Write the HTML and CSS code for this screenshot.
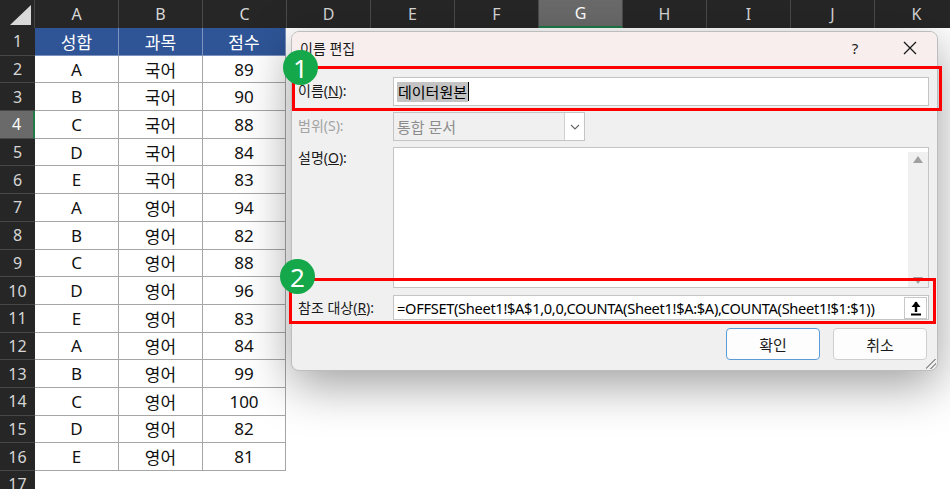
FILE: index.html
```html
<!DOCTYPE html>
<html lang="ko">
<head>
  <meta charset="UTF-8">
  <title>이름 편집</title>
  <link rel="stylesheet" href="styles.css">
</head>
<body>

  <!-- Sheet -->
  <div class="sheet">
    <div class="colhead">
      <div class="corner"><span class="corner-tri"></span></div>
      <div class="ch">A</div>
      <div class="ch">B</div>
      <div class="ch">C</div>
      <div class="ch">D</div>
      <div class="ch">E</div>
      <div class="ch">F</div>
      <div class="ch ch-sel">G</div>
      <div class="ch">H</div>
      <div class="ch">I</div>
      <div class="ch">J</div>
      <div class="ch">K</div>
    </div>

    <div class="row head-row"><div class="rh">1</div><div class="c hc">성함</div><div class="c hc">과목</div><div class="c hc">점수</div><div class="fill"></div></div>
    <div class="row"><div class="rh">2</div><div class="c">A</div><div class="c">국어</div><div class="c">89</div><div class="fill"></div></div>
    <div class="row"><div class="rh">3</div><div class="c">B</div><div class="c">국어</div><div class="c">90</div><div class="fill"></div></div>
    <div class="row"><div class="rh rh-sel">4</div><div class="c">C</div><div class="c">국어</div><div class="c">88</div><div class="fill"></div></div>
    <div class="row"><div class="rh">5</div><div class="c">D</div><div class="c">국어</div><div class="c">84</div><div class="fill"></div></div>
    <div class="row"><div class="rh">6</div><div class="c">E</div><div class="c">국어</div><div class="c">83</div><div class="fill"></div></div>
    <div class="row"><div class="rh">7</div><div class="c">A</div><div class="c">영어</div><div class="c">94</div><div class="fill"></div></div>
    <div class="row"><div class="rh">8</div><div class="c">B</div><div class="c">영어</div><div class="c">82</div><div class="fill"></div></div>
    <div class="row"><div class="rh">9</div><div class="c">C</div><div class="c">영어</div><div class="c">88</div><div class="fill"></div></div>
    <div class="row"><div class="rh">10</div><div class="c">D</div><div class="c">영어</div><div class="c">96</div><div class="fill"></div></div>
    <div class="row"><div class="rh">11</div><div class="c">E</div><div class="c">영어</div><div class="c">83</div><div class="fill"></div></div>
    <div class="row"><div class="rh">12</div><div class="c">A</div><div class="c">영어</div><div class="c">84</div><div class="fill"></div></div>
    <div class="row"><div class="rh">13</div><div class="c">B</div><div class="c">영어</div><div class="c">99</div><div class="fill"></div></div>
    <div class="row"><div class="rh">14</div><div class="c">C</div><div class="c">영어</div><div class="c">100</div><div class="fill"></div></div>
    <div class="row"><div class="rh">15</div><div class="c">D</div><div class="c">영어</div><div class="c">82</div><div class="fill"></div></div>
    <div class="row"><div class="rh">16</div><div class="c">E</div><div class="c">영어</div><div class="c">81</div><div class="fill"></div></div>
    <div class="row empty-row"><div class="rh">17</div><div class="e"></div><div class="e"></div><div class="e"></div><div class="fill"></div></div>
  </div>

  <!-- Dialog -->
  <div class="dialog">
    <div class="dlg-title">
      <span>이름 편집</span>
      <span class="title-btn help">?</span>
      <span class="title-btn close">
        <svg width="14" height="14" viewBox="0 0 14 14"><path d="M1 1 L13 13 M13 1 L1 13" stroke="#1a1a1a" stroke-width="1.3" fill="none"/></svg>
      </span>
    </div>

    <div class="dlg-body">
      <div class="field f-name">
        <label>이름(<u>N</u>):</label>
        <div class="box"><span class="sel-text">데이터원본</span><span class="caret"></span></div>
      </div>

      <div class="field f-scope">
        <label class="disabled">범위(S):</label>
        <div class="box scope-box">
          <span class="scope-text">통합 문서</span>
          <span class="drop">
            <svg width="10" height="6" viewBox="0 0 10 6"><path d="M1 1 L5 5 L9 1" stroke="#666" stroke-width="1.1" fill="none"/></svg>
          </span>
        </div>
      </div>

      <div class="field f-desc">
        <label>설명(<u>O</u>):</label>
        <div class="box desc-box">
          <div class="vscroll">
            <svg width="10" height="7" viewBox="0 0 10 7"><path d="M0 7 L5 0 L10 7 Z" fill="#a0a0a0"/></svg>
            <svg width="10" height="7" viewBox="0 0 10 7"><path d="M0 0 L5 7 L10 0 Z" fill="#a0a0a0"/></svg>
          </div>
        </div>
      </div>

      <div class="field f-ref">
        <label>참조 대상(<u>R</u>):</label>
        <div class="box ref-box">
          <span class="formula">=OFFSET(Sheet1!$A$1,0,0,COUNTA(Sheet1!$A:$A),COUNTA(Sheet1!$1:$1))</span>
          <span class="collapse-btn">
            <svg width="12" height="16" viewBox="0 0 12 16"><path d="M6 2 L6 12" stroke="#000" stroke-width="2.4"/><path d="M1.5 7 L6 1.5 L10.5 7 Z" fill="#000"/><path d="M1 14.5 L11 14.5" stroke="#000" stroke-width="2"/></svg>
          </span>
        </div>
      </div>

      <div class="dlg-buttons">
        <button class="btn btn-ok">확인</button>
        <button class="btn">취소</button>
      </div>
    </div>
    <span class="grip"></span>
  </div>

  <!-- Annotations -->
  <div class="mark mark-1"></div>
  <div class="mark mark-2"></div>
  <div class="badge badge-1">1</div>
  <div class="badge badge-2">2</div>

</body>
</html>
```

FILE: styles.css
```css
* {
  box-sizing: border-box;
  margin: 0;
  padding: 0;
}

body {
  font-family: "Noto Sans", "Noto Sans CJK KR", sans-serif;
  background: #fff;
  width: 950px;
  height: 489px;
  overflow: hidden;
  position: relative;
}

/* Sheet */
.sheet {
  width: 950px;
}

.colhead {
  display: flex;
  height: 28px;
  background: #262626;
}

.corner {
  width: 35px;
  flex: none;
  position: relative;
  border-right: 1px solid #444;
}

.corner-tri {
  position: absolute;
  right: 3px;
  bottom: 3px;
  width: 0;
  height: 0;
  border-left: 21px solid transparent;
  border-bottom: 20px solid #d9d9d9;
}

.ch {
  width: 84px;
  flex: none;
  color: #d6d6d6;
  font-size: 16px;
  display: flex;
  align-items: center;
  justify-content: center;
  border-right: 1px solid #4a4a4a;
}

.ch-sel {
  background: #6a6a6a;
  color: #fff;
  border-bottom: 2px solid #1f7a46;
}

.row {
  display: grid;
  grid-template-columns: 35px 84px 84px 83px 1fr;
  height: 27.7px;
}

.rh {
  background: #262626;
  color: #d6d6d6;
  font-size: 16px;
  display: flex;
  align-items: center;
  justify-content: center;
  border-bottom: 1px solid #474747;
}

.rh-sel {
  background: #6a6a6a;
  color: #fff;
  border-right: 2px solid #1f7a46;
}

.c {
  font-size: 17px;
  color: #111;
  display: flex;
  align-items: center;
  justify-content: center;
  border-right: 1px solid #a6a6a6;
  border-bottom: 1px solid #a6a6a6;
}

.hc {
  background: #2f5597;
  color: #fff;
  border-right: 1px solid #7d93bd;
  border-bottom: 1px solid #7d93bd;
}

.head-row .c:last-of-type {
  border-right-color: #a6a6a6;
}

.e {
  border-right: 1px solid transparent;
}

/* Dialog */
.dialog {
  position: absolute;
  left: 291px;
  top: 31px;
  width: 647px;
  height: 340px;
  background: #f0f0f0;
  border: 1px solid #bdbdbd;
  border-radius: 8px;
  box-shadow: 0 14px 48px rgba(0, 0, 0, 0.38);
  overflow: hidden;
}

.dlg-title {
  height: 31px;
  background: #f8eeee;
  display: flex;
  align-items: center;
  padding-left: 8px;
  font-size: 14px;
  color: #1a1a1a;
}

.title-btn {
  display: flex;
  align-items: center;
  justify-content: center;
}

.help {
  margin-left: auto;
  width: 20px;
  font-size: 15px;
  margin-right: 35px;
}

.close {
  width: 20px;
  margin-right: 17px;
}

.dlg-body {
  padding: 14px 8px 0 6px;
}

.field {
  display: grid;
  grid-template-columns: 95px 1fr;
}

.field label {
  font-size: 14px;
  color: #1a1a1a;
  padding-top: 3px;
}

.field label.disabled {
  color: #a3a3a3;
}

.box {
  background: #fff;
  border: 1px solid #c4c4c4;
  display: flex;
  align-items: center;
}

.f-name .box {
  height: 29px;
  padding-left: 3px;
}

.sel-text {
  font-size: 15px;
  background: #c4c4c4;
  color: #000;
  line-height: 20px;
  padding: 0 1px;
}

.caret {
  width: 1px;
  height: 19px;
  background: #000;
}

.f-scope {
  margin-top: 6px;
}

.scope-box {
  width: 192px;
  height: 29px;
  background: #f0f0f0;
  padding-left: 3px;
}

.scope-text {
  font-size: 15px;
  color: #8c8c8c;
  flex: 1;
}

.drop {
  width: 20px;
  height: 27px;
  background: #fff;
  border-left: 1px solid #d0d0d0;
  display: flex;
  align-items: center;
  justify-content: center;
}

.f-desc {
  margin-top: 6px;
}

.f-desc label {
  padding-top: 0;
}

.desc-box {
  height: 141px;
  justify-content: flex-end;
  align-items: stretch;
  padding: 4px 0 0 0;
}

.vscroll {
  width: 20px;
  background: #f0f0f0;
  display: flex;
  flex-direction: column;
  justify-content: space-between;
  align-items: center;
  padding: 4px 0 3px;
}

.f-ref {
  margin-top: 7px;
}

.f-ref label {
  padding-top: 2px;
}

.ref-box {
  height: 25px;
  padding-left: 3px;
}

.formula {
  flex: 1;
  font-size: 14.6px;
  letter-spacing: -0.3px;
  color: #000;
  white-space: nowrap;
}

.collapse-btn {
  width: 23px;
  height: 22px;
  margin-right: 1px;
  border: 1px solid #c8c8c8;
  display: flex;
  align-items: center;
  justify-content: center;
}

.dlg-buttons {
  margin-top: 8px;
  display: flex;
  justify-content: flex-end;
  gap: 13px;
  padding-right: 2px;
}

.btn {
  width: 94px;
  height: 32px;
  background: #fdfdfd;
  border: 1px solid #cfcfcf;
  border-radius: 4px;
  font-family: inherit;
  font-size: 15px;
  color: #1a1a1a;
}

.btn-ok {
  border: 1px solid #5a9bd8;
}

.grip {
  position: absolute;
  right: 1px;
  bottom: 1px;
  width: 10px;
  height: 10px;
  background: linear-gradient(135deg, transparent 45%, #9a9a9a 45%, #9a9a9a 52%, transparent 52%, transparent 70%, #9a9a9a 70%, #9a9a9a 77%, transparent 77%);
}

/* Annotations */
.mark {
  position: absolute;
  border: 3px solid #ff0000;
}

.mark-1 {
  left: 292px;
  top: 66px;
  width: 650px;
  height: 45px;
}

.mark-2 {
  left: 289px;
  top: 278px;
  width: 647px;
  height: 46px;
}

.badge {
  position: absolute;
  width: 35px;
  height: 35px;
  border-radius: 50%;
  background: #14a84a;
  color: #fff;
  font-size: 26px;
  display: flex;
  align-items: center;
  justify-content: center;
  font-family: "Noto Sans", sans-serif;
}

.badge-1 {
  left: 283px;
  top: 50px;
}

.badge-2 {
  left: 280px;
  top: 259px;
}
```
